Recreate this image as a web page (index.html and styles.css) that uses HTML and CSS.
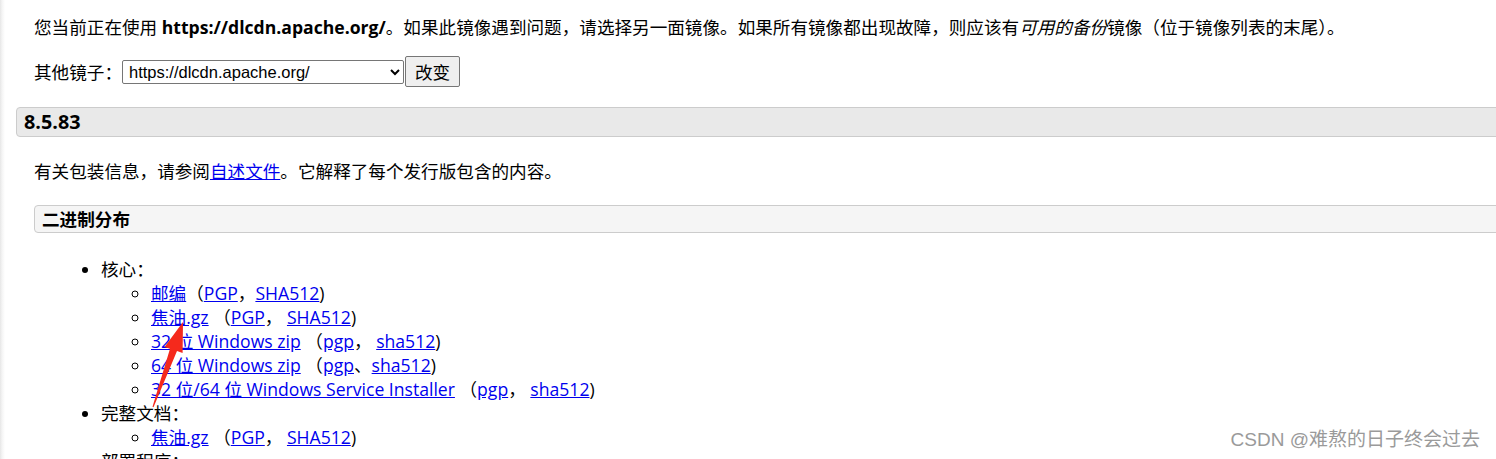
FILE: index.html
```html
<!DOCTYPE html>
<html lang="zh-CN">
<head>
  <meta charset="UTF-8" />
  <meta name="viewport" content="width=device-width, initial-scale=1.0"/>
  <title>Apache Tomcat 8 下载</title>
  <link rel="stylesheet" href="styles.css">
</head>
<body>

  <div class="page">
    <p class="mirror-note">您当前正在使用 <b>https://dlcdn.apache.org/</b>。如果此镜像遇到问题，请选择另一面镜像。如果所有镜像都出现故障，则应该有<i>可用的备份</i>镜像（位于镜像列表的末尾）。</p>

    <form class="mirror-form">
      <label>其他镜子：</label>
      <select>
        <option>https://dlcdn.apache.org/</option>
      </select>
      <button type="button">改变</button>
    </form>

    <h2 class="version">8.5.83</h2>

    <div class="release">
      <p>有关包装信息，请参阅<a href="#readme">自述文件</a>。它解释了每个发行版包含的内容。</p>

      <h3 class="dist">二进制分布</h3>

      <ul class="files">
        <li>核心：
          <ul>
            <li><a href="#">邮编</a>（<a href="#">PGP</a>，<a href="#">SHA512</a>)</li>
            <li><a href="#">焦油.gz</a> （<a href="#">PGP</a>， <a href="#">SHA512</a>)</li>
            <li><a href="#">32 位 Windows zip</a> （<a href="#">pgp</a>， <a href="#">sha512</a>)</li>
            <li><a href="#">64 位 Windows zip</a> （<a href="#">pgp</a>、<a href="#">sha512</a>)</li>
            <li><a href="#">32 位/64 位 Windows Service Installer</a> （<a href="#">pgp</a>， <a href="#">sha512</a>)</li>
          </ul>
        </li>
        <li>完整文档：
          <ul>
            <li><a href="#">焦油.gz</a> （<a href="#">PGP</a>， <a href="#">SHA512</a>)</li>
          </ul>
        </li>
        <li>部署程序：</li>
      </ul>
    </div>
  </div>

  <!-- 标注箭头 -->
  <svg class="arrow" width="60" height="100" viewBox="0 0 60 100">
    <polygon points="10.5,95.8 28,37.8 22.5,36 41,11 40.6,42 35,40 11.5,96.2" fill="#f5291c"/>
  </svg>

  <div class="watermark">CSDN @难熬的日子终会过去</div>

</body>
</html>
```

FILE: styles.css
```css
body {
  margin: 0;
  font-family: "Open Sans", "Noto Sans CJK SC", sans-serif;
  font-size: 17.6px;
  line-height: 24px;
  color: #000;
  background: linear-gradient(to right, #e6e6e6 0, #f4f4f4 2px, #fff 5px);
  overflow: hidden;
  position: relative;
  height: 459px;
}

.page {
  padding-left: 16px;
}

a {
  color: #0000ee;
}

.mirror-note {
  margin: 0;
  padding: 15px 0 0 18px;
  white-space: nowrap;
}

.mirror-form {
  margin: 17px 0 0 18px;
  display: flex;
  align-items: center;
}

.mirror-form select {
  width: 282px;
  height: 24px;
  font-family: "Liberation Sans", Arial, sans-serif;
  font-size: 16.5px;
  border: 1px solid #767676;
  border-radius: 2px;
  background: #fff;
  padding: 0 2px;
}

.mirror-form button {
  height: 31px;
  width: 55px;
  padding: 0;
  margin-left: 1px;
  font-family: "Noto Sans CJK SC", sans-serif;
  font-size: 17.6px;
  background: #efefef;
  border: 1px solid #767676;
  border-radius: 2px;
}

.version {
  margin: 20px -10px 0 0;
  height: 28px;
  line-height: 28px;
  padding-left: 7px;
  font-size: 19.8px;
  font-weight: bold;
  background: #e9e9e9;
  border: 1px solid #cccccc;
  border-radius: 4px 0 0 4px;
}

.release {
  padding-left: 18px;
}

.release p {
  margin: 22px 0 0;
}

.dist {
  margin: 22px -10px 0 0;
  height: 26px;
  line-height: 26px;
  padding-left: 7px;
  font-size: 17.6px;
  font-weight: bold;
  background: #f5f5f5;
  border: 1px solid #cccccc;
  border-radius: 4px 0 0 4px;
}

.files {
  margin: 24px 0 0;
  padding-left: 67px;
}

.files ul {
  margin: 0;
  padding-left: 50px;
  list-style-type: circle;
}

.arrow {
  position: absolute;
  left: 142px;
  top: 311px;
}

.watermark {
  position: absolute;
  right: 16px;
  bottom: 7px;
  font-family: "Liberation Sans", "Noto Sans CJK SC", sans-serif;
  font-size: 19px;
  color: #9a9a9a;
  text-shadow: 0 0 1px #fff;
}
```
